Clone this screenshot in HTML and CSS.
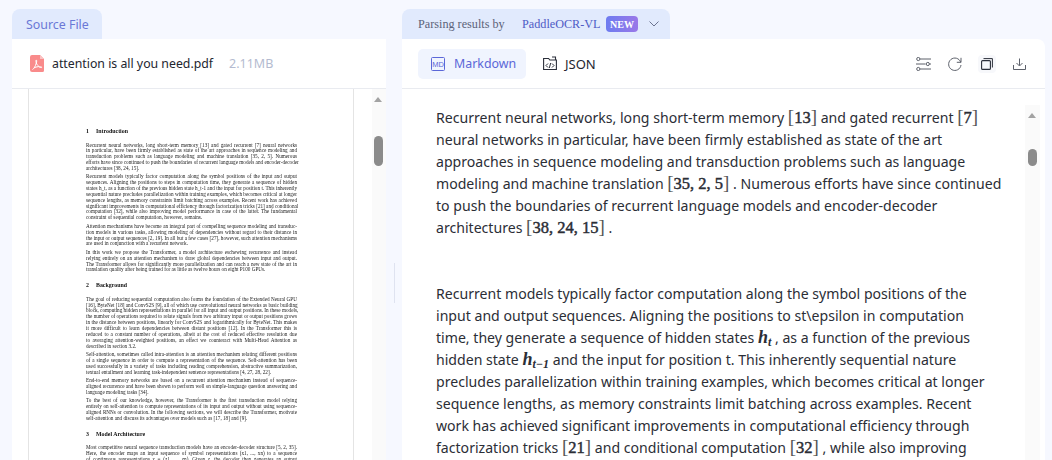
FILE: index.html
```html
<!DOCTYPE html>
<html lang="en">
<head>
<meta charset="utf-8">
<title>Parsing results</title>
<link rel="stylesheet" href="styles.css">
</head>
<body>
<main class="app">
  <section class="col col-left">
    <div class="tab tab-source">Source File</div>
    <div class="panel">
      <header class="bar bar-file">
        <svg class="pdf-icon" width="14" height="17" viewBox="0 0 14 17"><path d="M2 0h8l4 4v11.500a1.500 1.500 0 0 1-1.500 1.500h-10.500a2 2 0 0 1-2-2v-13a2 2 0 0 1 2-2z" fill="#f98b8b"/><path d="M10 0l4 4h-4z" fill="#fbc2c2"/><path d="M2.500 14.500c1.500-.8 2.800-3 3.800-6.500-.4-1.500-.5-2.800 0-3 .6 0 .5 1.700 0 3 .8 2 2 3.200 3.200 3.700 1.200.1 2.500.2 2.300.7-.3.500-2 0-3.300-.8-1.800.2-3.300.6-4.600 1.300" fill="none" stroke="#fff" stroke-width="1"/></svg>
        <span class="file-name">attention is all you need.pdf</span>
        <span class="file-size">2.11MB</span>
      </header>
      <div class="viewer">
        <div class="pdf-page">
          <div class="pdf-text">
            <h4><span class="num">1</span>Introduction</h4>
            <p><span>Recurrent neural networks, long short-term memory [13] and gated recurrent [7] neural networks</span><span>in particular, have been firmly established as state of the art approaches in sequence modeling and</span><span>transduction problems such as language modeling and machine translation [35, 2, 5]. Numerous</span><span>efforts have since continued to push the boundaries of recurrent language models and encoder-decoder</span><span class="last">architectures [38, 24, 15].</span></p>
            <p><span>Recurrent models typically factor computation along the symbol positions of the input and output</span><span>sequences. Aligning the positions to steps in computation time, they generate a sequence of hidden</span><span>states h_t, as a function of the previous hidden state h_t-1 and the input for position t. This inherently</span><span>sequential nature precludes parallelization within training examples, which becomes critical at longer</span><span>sequence lengths, as memory constraints limit batching across examples. Recent work has achieved</span><span>significant improvements in computational efficiency through factorization tricks [21] and conditional</span><span>computation [32], while also improving model performance in case of the latter. The fundamental</span><span class="last">constraint of sequential computation, however, remains.</span></p>
            <p><span>Attention mechanisms have become an integral part of compelling sequence modeling and transduc-</span><span>tion models in various tasks, allowing modeling of dependencies without regard to their distance in</span><span>the input or output sequences [2, 19]. In all but a few cases [27], however, such attention mechanisms</span><span class="last">are used in conjunction with a recurrent network.</span></p>
            <p><span>In this work we propose the Transformer, a model architecture eschewing recurrence and instead</span><span>relying entirely on an attention mechanism to draw global dependencies between input and output.</span><span>The Transformer allows for significantly more parallelization and can reach a new state of the art in</span><span class="last">translation quality after being trained for as little as twelve hours on eight P100 GPUs.</span></p>
            <h4><span class="num">2</span>Background</h4>
            <p><span>The goal of reducing sequential computation also forms the foundation of the Extended Neural GPU</span><span>[16], ByteNet [18] and ConvS2S [9], all of which use convolutional neural networks as basic building</span><span>block, computing hidden representations in parallel for all input and output positions. In these models,</span><span>the number of operations required to relate signals from two arbitrary input or output positions grows</span><span>in the distance between positions, linearly for ConvS2S and logarithmically for ByteNet. This makes</span><span>it more difficult to learn dependencies between distant positions [12]. In the Transformer this is</span><span>reduced to a constant number of operations, albeit at the cost of reduced effective resolution due</span><span>to averaging attention-weighted positions, an effect we counteract with Multi-Head Attention as</span><span class="last">described in section 3.2.</span></p>
            <p><span>Self-attention, sometimes called intra-attention is an attention mechanism relating different positions</span><span>of a single sequence in order to compute a representation of the sequence. Self-attention has been</span><span>used successfully in a variety of tasks including reading comprehension, abstractive summarization,</span><span class="last">textual entailment and learning task-independent sentence representations [4, 27, 28, 22].</span></p>
            <p><span>End-to-end memory networks are based on a recurrent attention mechanism instead of sequence-</span><span>aligned recurrence and have been shown to perform well on simple-language question answering and</span><span class="last">language modeling tasks [34].</span></p>
            <p><span>To the best of our knowledge, however, the Transformer is the first transduction model relying</span><span>entirely on self-attention to compute representations of its input and output without using sequence-</span><span>aligned RNNs or convolution. In the following sections, we will describe the Transformer, motivate</span><span class="last">self-attention and discuss its advantages over models such as [17, 18] and [9].</span></p>
            <h4><span class="num">3</span>Model Architecture</h4>
            <p><span>Most competitive neural sequence transduction models have an encoder-decoder structure [5, 2, 35].</span><span>Here, the encoder maps an input sequence of symbol representations (x1, ..., xn) to a sequence</span><span>of continuous representations z = (z1, ..., zn). Given z, the decoder then generates an output</span></p>
          </div>
        </div>
        <div class="scroll scroll-pdf"><i class="arrow"></i><b class="thumb thumb-pdf"></b></div>
      </div>
    </div>
  </section>

  <div class="splitter"></div>

  <section class="col col-right">
    <div class="tab tab-result">
      <span class="by">Parsing results by</span>
      <span class="model">PaddleOCR-VL</span>
      <span class="new">NEW</span>
      <svg class="chev" width="10" height="6" viewBox="0 0 10 6"><path d="M.5.500l4.500 4.500 4.500-4.500" fill="none" stroke="#6b7390" stroke-width="1"/></svg>
    </div>
    <div class="panel panel-right">
      <header class="bar bar-tools">
        <div class="seg seg-on">
          <svg class="ico" width="14" height="14" viewBox="0 0 14 14"><rect x=".5" y=".5" width="13" height="13" rx="1" fill="none" stroke="#5b67d8"/><text x="7" y="9.800" class="md-text">MD</text></svg>
          <span>Markdown</span>
        </div>
        <div class="seg seg-json">
          <svg class="ico" width="14" height="15" viewBox="0 0 14 15"><path d="M.6 13.500V2.500h5l1.200 1.500h6.600v9.500zM9 1h3.500v3" fill="none" stroke="#2b2f3a" stroke-width="1.100"/><path d="M5 7.500l-2 2 2 2M9 7.500l2 2-2 2M7.700 7l-1.400 5" fill="none" stroke="#2b2f3a" stroke-width="1"/></svg>
          <span>JSON</span>
        </div>
        <div class="tools">
          <svg width="15" height="14" viewBox="0 0 15 14"><g fill="none" stroke="#5d616b" stroke-width="1"><path d="M4 2h11M0 7h9.500M13.500 7h1.500M4 12h11"/><circle cx="2.300" cy="2" r="1.600"/><circle cx="11.800" cy="7" r="1.600"/><circle cx="2.300" cy="12" r="1.600"/></g></svg>
          <svg width="14" height="14" viewBox="0 0 14 14"><path d="M12.700 5.200A6.200 6.200 0 1 0 13 8M13 .8v4.500H8.800" fill="none" stroke="#5d616b" stroke-width="1"/></svg>
          <span class="copy"><svg width="12" height="12" viewBox="0 0 12 12"><rect x=".6" y="2.600" width="8.800" height="8.800" rx="1" fill="none" stroke="#2b2f3a" stroke-width="1.100"/><path d="M2.500.6h8.900v8.900" fill="none" stroke="#2b2f3a" stroke-width="1"/></svg></span>
          <svg width="13" height="12" viewBox="0 0 13 12"><path d="M6.500 .5v7M3.500 5l3 3 3-3M.5 7v4.500h12V7" fill="none" stroke="#5d616b" stroke-width="1"/></svg>
        </div>
      </header>
      <div class="viewer viewer-md">
        <article class="md">
          <p>Recurrent neural networks, long short-term memory <span class="m">[<b>13</b>]</span> and gated recurrent <span class="m">[<b>7</b>]</span> neural networks in particular, have been firmly established as state of the art approaches in sequence modeling and transduction problems such as language modeling and machine translation <span class="m">[<b>35, 2, 5</b>]</span> . Numerous efforts have since continued to push the boundaries of recurrent language models and encoder-decoder architectures <span class="m">[<b>38, 24, 15</b>]</span> .</p>
          <p>Recurrent models typically factor computation along the symbol positions of the input and output sequences. Aligning the positions to st\epsilon in computation time, they generate a sequence of hidden states <span class="m"><b class="v">h<sub>t</sub></b></span> , as a function of the previous hidden state <span class="m"><b class="v">h<sub>t−1</sub></b></span> and the input for position t. This inherently sequential nature precludes parallelization within training examples, which becomes critical at longer sequence lengths, as memory constraints limit batching across examples. Recent work has achieved significant improvements in computational efficiency through factorization tricks <span class="m">[<b>21</b>]</span> and conditional computation <span class="m">[<b>32</b>]</span> , while also improving</p>
        </article>
        <div class="scroll scroll-md"><i class="arrow"></i><b class="thumb thumb-md"></b></div>
      </div>
    </div>
  </section>
</main>
</body>
</html>
```
FILE: styles.css
```css
* { box-sizing: border-box; }
html, body { margin: 0; height: 460px; overflow: hidden; }
body { background: #f6f8ff; font-family: "Noto Sans", sans-serif; color: #23262f; }
.app { display: flex; padding: 9px 7px 0 12px; height: 460px; }
.col { display: flex; flex-direction: column; align-items: flex-start; }
.col-left { width: 374px; }
.col-right { width: 643px; }
.splitter { width: 16px; position: relative; }
.splitter::after { content: ""; position: absolute; left: 8px; top: 254px; width: 1px; height: 40px; background: #dfe3f0; }
.tab { height: 30px; background: #e1eafd; border-radius: 8px 8px 0 0; display: flex; align-items: center; font-size: 12.400px; }
.tab-source { width: 90px; padding-left: 14px; color: #6a78d6; }
.tab-result { width: 268px; padding-left: 16px; font-family: "Liberation Serif", serif; font-size: 12.200px; }
.by { color: #5c6379; width: 104px; }
.model { color: #4f5bc5; width: 84px; }
.new { width: 32px; height: 16px; margin-right: 11px; border-radius: 4px; background: linear-gradient(90deg, #6d7cf0, #9a78e8); color: #fff; font-weight: bold; font-size: 10px; display: flex; align-items: center; justify-content: center; }
.panel { width: 100%; flex: 1; background: #fff; display: flex; flex-direction: column; min-height: 0; }
.panel-right { border-radius: 0 8px 0 0; }
.bar { height: 50px; border-bottom: 1px solid #e9ebf0; display: flex; align-items: center; flex: none; }
.bar-file { padding-left: 18px; font-size: 12.300px; }
.file-name { margin-left: 8px; color: #23262f; }
.file-size { margin-left: 16px; color: #b4bbd0; font-size: 12.500px; }
.bar-tools { padding: 0 19px 0 16px; font-size: 12.400px; }
.seg { height: 30px; display: flex; align-items: center; gap: 9px; padding-left: 13px; border-radius: 5px; color: #23262f; flex: none; }
.seg-json { margin-left: 4px; gap: 8px; font-size: 13px; }
.seg-on { background: #f0f4fe; color: #5b67d8; width: 108px; }
.ico { flex: none; }
.md-text { font: 7.500px "Liberation Sans", sans-serif; fill: #5b67d8; text-anchor: middle; }
.tools { margin-left: auto; display: flex; align-items: center; gap: 17px; }
.copy { width: 18px; height: 18px; background: #f7f8fb; border-radius: 4px; display: flex; align-items: center; justify-content: center; margin-left: -1px; }
.viewer { flex: 1; min-height: 0; display: flex; position: relative; overflow: hidden; }
.pdf-page { margin-left: 16px; width: 326px; height: 400px; border: solid #e4e4e4; border-width: 0 1px; background: #fff; flex: none; }
.pdf-text { margin-left: 57px; width: 211px; padding-top: 39px; font-family: "Liberation Serif", serif; font-size: 5.200px; line-height: 5.850px; color: #222; filter: blur(.4px); }
.pdf-text h4 { margin: 0 0 8.500px; font-size: 5.900px; line-height: 6px; font-weight: bold; color: #111; }
.pdf-text h4:not(:first-child) { margin-top: 9px; }
.num { display: inline-block; width: 10px; }
.pdf-text p { margin: 0 0 2.700px; }
.pdf-text p span { display: block; white-space: nowrap; text-align: justify; text-align-last: justify; }
.pdf-text p span.last { text-align-last: left; }
.scroll { position: absolute; top: 0; bottom: 0; width: 15px; background: #fafafa; }
.scroll-pdf { right: 0; width: 14px; }
.scroll-md { right: 5px; top: 16px; }
.arrow { position: absolute; top: 8px; left: 3px; width: 0; height: 0; border: solid transparent; border-width: 0 4.500px 5px; border-bottom-color: #a3a3a3; }
.scroll-pdf .arrow { left: 2px; }
.thumb { position: absolute; left: 3px; width: 9px; border-radius: 5px; background: #8b8b8b; }
.thumb-pdf { top: 47px; height: 30px; left: 2px; }
.thumb-md { top: 44px; height: 17px; }
.viewer-md { padding-left: 34px; }
.md { width: 568px; padding-top: 18px; font-size: 14.100px; line-height: 22px; color: #2b2e36; }
.md p { margin: 0 0 44px; }
.md p + p { width: 560px; }
.m { font-family: "Liberation Serif", serif; font-size: 19px; font-weight: 400; line-height: 0; color: #555; }
.m b { color: #2b2e36; font-weight: 400; font-size: 16.500px; -webkit-text-stroke: .45px #2b2e36; }
.m .v { font-style: italic; font-weight: 700; font-size: 18px; -webkit-text-stroke: 0; }
.m sub { font-size: 12px; line-height: 0; vertical-align: -3px; }
```
